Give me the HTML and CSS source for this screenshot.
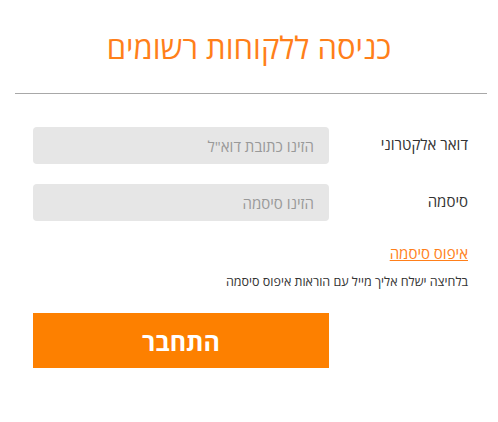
FILE: index.html
```html
<!DOCTYPE html>
<html lang="he" dir="rtl">
<head>
    <meta charset="UTF-8">
    <meta name="viewport" content="width=device-width, initial-scale=1.0">
    <title>כניסה ללקוחות רשומים</title>
    <link rel="stylesheet" href="styles.css">
</head>
<body>
<div class="container">
    <h1>כניסה ללקוחות רשומים</h1>
    <hr class="divider">
    <form class="login-form" onsubmit="return false;">
        <div class="form-group">
            <label for="email">דואר אלקטרוני</label>
            <input type="text" id="email" name="email" placeholder="הזינו כתובת דוא&quot;ל">
        </div>
        <div class="form-group">
            <label for="password">סיסמה</label>
            <input type="password" id="password" name="password" placeholder="הזינו סיסמה">
        </div>
        <div class="reset">
            <a href="#" class="reset-link">איפוס סיסמה</a>
            <p class="reset-note">בלחיצה ישלח אליך מייל עם הוראות איפוס סיסמה</p>
        </div>
        <div class="actions">
            <button type="submit">התחבר</button>
        </div>
    </form>
</div>
</body>
</html>
```

FILE: styles.css
```css
body {
    font-family: "Open Sans", "DejaVu Sans", sans-serif;
    margin: 0;
    background: #fff;
    color: #333;
}
.container {
    width: 498px;
}
h1 {
    margin: 0;
    padding: 27px 0 0;
    height: 66px;
    font-size: 31px;
    font-weight: normal;
    line-height: 40px;
    text-align: center;
    color: #ff7f1a;
}
.divider {
    margin: 0 11px 0 15px;
    border: none;
    border-top: 1px solid #a8a8a8;
}
.login-form {
    padding: 33px 30px 0 33px;
}
.form-group {
    display: flex;
    align-items: center;
    justify-content: space-between;
    margin-bottom: 20px;
}
label {
    font-size: 15px;
    color: #333;
    margin-top: -3px;
}
input[type="text"], input[type="password"] {
    width: 296px;
    height: 37px;
    padding: 0 15px;
    box-sizing: border-box;
    border: none;
    border-radius: 4px;
    background-color: #e6e6e6;
    font-family: inherit;
    font-size: 15px;
    color: #333;
}
input::placeholder {
    color: #999;
}
.reset {
    padding-top: 1px;
}
.reset-link {
    font-size: 15px;
    color: #ff7f1a;
    text-decoration: underline;
}
.reset-note {
    margin: 9px 0 0;
    font-size: 12.5px;
    color: #333;
}
.actions {
    display: flex;
    justify-content: flex-end;
    margin-top: 23px;
}
button {
    width: 296px;
    height: 55px;
    border: none;
    background-color: #fd8000;
    color: #fff;
    font-family: inherit;
    font-size: 25px;
    font-weight: bold;
    cursor: pointer;
}
```
